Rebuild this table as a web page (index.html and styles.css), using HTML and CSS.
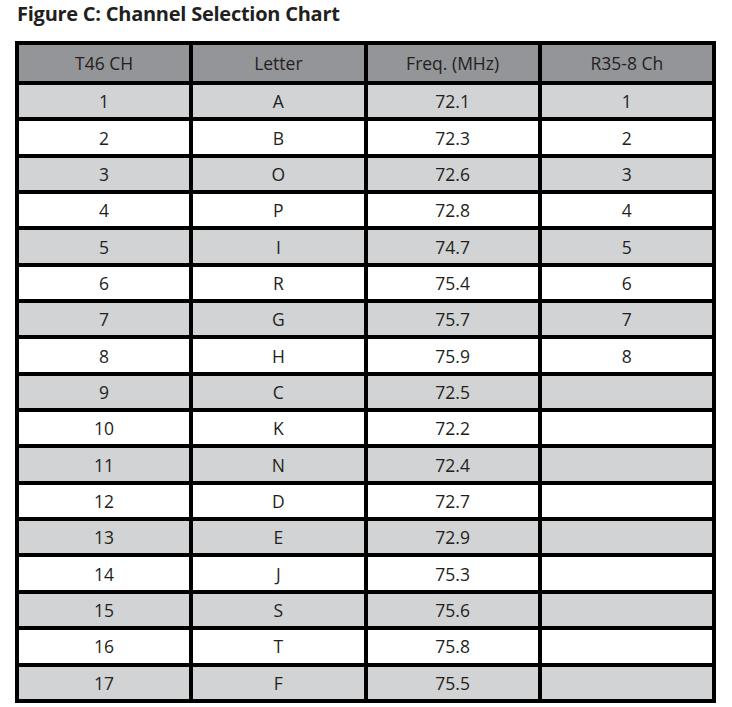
FILE: index.html
```html
<!DOCTYPE html>
<html>
<head>
<meta charset="utf-8">
<link rel="stylesheet" href="styles.css">
</head>
<body>
<h1 class="title">Figure C: Channel Selection Chart</h1>
<div class="chart">
  <div class="cell head">T46 CH</div><div class="cell head">Letter</div><div class="cell head">Freq. (MHz)</div><div class="cell head">R35-8 Ch</div>
  <div class="cell shade">1</div><div class="cell shade">A</div><div class="cell shade">72.1</div><div class="cell shade">1</div>
  <div class="cell">2</div><div class="cell">B</div><div class="cell">72.3</div><div class="cell">2</div>
  <div class="cell shade">3</div><div class="cell shade">O</div><div class="cell shade">72.6</div><div class="cell shade">3</div>
  <div class="cell">4</div><div class="cell">P</div><div class="cell">72.8</div><div class="cell">4</div>
  <div class="cell shade">5</div><div class="cell shade">I</div><div class="cell shade">74.7</div><div class="cell shade">5</div>
  <div class="cell">6</div><div class="cell">R</div><div class="cell">75.4</div><div class="cell">6</div>
  <div class="cell shade">7</div><div class="cell shade">G</div><div class="cell shade">75.7</div><div class="cell shade">7</div>
  <div class="cell">8</div><div class="cell">H</div><div class="cell">75.9</div><div class="cell">8</div>
  <div class="cell shade">9</div><div class="cell shade">C</div><div class="cell shade">72.5</div><div class="cell shade"></div>
  <div class="cell">10</div><div class="cell">K</div><div class="cell">72.2</div><div class="cell"></div>
  <div class="cell shade">11</div><div class="cell shade">N</div><div class="cell shade">72.4</div><div class="cell shade"></div>
  <div class="cell">12</div><div class="cell">D</div><div class="cell">72.7</div><div class="cell"></div>
  <div class="cell shade">13</div><div class="cell shade">E</div><div class="cell shade">72.9</div><div class="cell shade"></div>
  <div class="cell">14</div><div class="cell">J</div><div class="cell">75.3</div><div class="cell"></div>
  <div class="cell shade">15</div><div class="cell shade">S</div><div class="cell shade">75.6</div><div class="cell shade"></div>
  <div class="cell">16</div><div class="cell">T</div><div class="cell">75.8</div><div class="cell"></div>
  <div class="cell shade">17</div><div class="cell shade">F</div><div class="cell shade">75.5</div><div class="cell shade"></div>
</div>
</body>
</html>
```
FILE: styles.css
```css
html, body {
  margin: 0;
  padding: 0;
  background: #ffffff;
}
body {
  padding: 0 0 0 15px;
  font-family: "Open Sans", "Liberation Sans", sans-serif;
  color: #231f20;
}
.title {
  margin: 0;
  padding: 2px 0 0 2px;
  height: 39px;
  font-size: 20px;
  line-height: 24px;
  font-weight: 700;
  letter-spacing: -0.25px;
  color: #231f20;
}
.chart {
  width: 693px;
  display: grid;
  grid-template-columns: repeat(4, 1fr);
  grid-template-rows: 36px repeat(17, 32.35px);
  gap: 4px 4px;
  padding: 4px;
  background: #000000;
}
.cell {
  background: #ffffff;
  display: flex;
  align-items: center;
  justify-content: center;
  font-size: 17.5px;
  font-weight: 400;
}
.cell.head {
  background: #939598;
}
.cell.shade {
  background: #d1d3d4;
}
```
